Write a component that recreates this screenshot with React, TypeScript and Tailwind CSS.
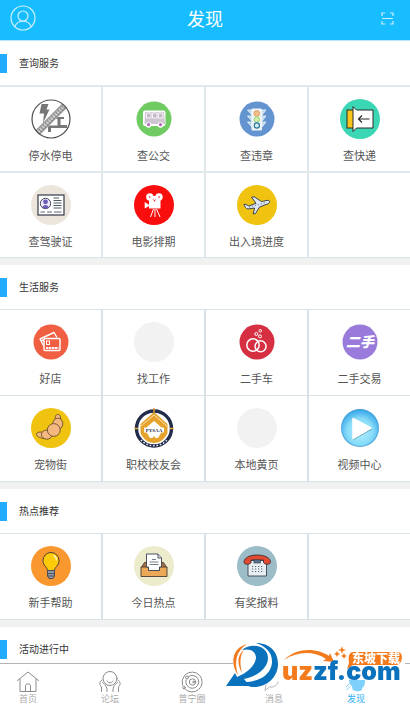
import React, { FC, ReactNode } from "react";

interface IService {
  label: string;
  icon: ReactNode;
}

interface ISection {
  title: string;
  cell: string;
  items: IService[];
}

const Badge: FC<{ fill: string; r?: number; children?: ReactNode }> = ({
  fill,
  r = 20,
  children,
}) => (
  <svg viewBox="0 0 40 40" className="w-10 h-10" aria-hidden="true">
    <circle cx="20" cy="20" r={r} fill={fill} />
    {children}
  </svg>
);

const OutageIcon = () => (
  <Badge fill="#fff">
    <path d="M10.5 5H17.5L15.5 10.5H18.5L12 24L13 14.5H8.5Z" fill="#777" />
    <path d="M24 18H33V20H29.5V26H36V29H20V33H17V26.5H26.5V20H24Z" fill="#777" />
    <path d="M4.5 31.5L31.5 4.5L36 9L9 36Z" fill="#c4c4c4" />
    <path d="M6.5 34L34 6.500" stroke="#8a8a8a" strokeWidth="4" strokeDasharray="1.5 1.5" />
    <path d="M7 33.5L34 6.5" stroke="#eee" strokeWidth="1" strokeDasharray="2 1" />
    <path d="M5 31.5L31.5 5M8.5 35L35 8.5" stroke="#666" strokeWidth="0.8" />
    <circle cx="20" cy="20" r="19" fill="none" stroke="#4f4f4f" strokeWidth="1.2" />
  </Badge>
);

const BusIcon = () => (
  <Badge fill="#6fcb62" r={17.5}>
    <rect x="9" y="11.5" width="22.5" height="15.5" rx="2" fill="#fff" />
    <path d="M11 13H30L31 25H10.5Z" fill="#cfc5d2" />
    <path
      d="M12.5 14H17V19H12.5ZM18.5 14H23V19H18.5ZM24.5 14H28.5L29 19H24.5Z"
      fill="#c3bdc9"
      stroke="#fff"
      strokeWidth="0.8"
    />
    <circle cx="14.5" cy="26" r="2.8" fill="#fff" />
    <circle cx="26.5" cy="26" r="2.8" fill="#fff" />
    <circle cx="14.5" cy="25.6" r="1.6" fill="#b266b8" />
    <circle cx="26.5" cy="25.6" r="1.6" fill="#b266b8" />
  </Badge>
);

const TrafficIcon = () => (
  <Badge fill="#6394cf" r={17.5}>
    <path
      d="M10.5 11H15V16ZM10.5 17H15V22ZM10.5 23H15V28ZM29 11H25V16ZM29 17H25V22ZM29 23H25V28Z"
      fill="#b9d6ee"
      stroke="#e4f0f8"
      strokeWidth="0.9"
    />
    <rect x="14.5" y="9.5" width="10.5" height="22" rx="1" fill="#eef4f4" />
    <circle cx="19.8" cy="14.5" r="2.8" fill="#f3c08a" stroke="#dc9a5c" />
    <circle cx="19.8" cy="20.5" r="2.8" fill="#cdebab" stroke="#9fd07d" />
    <circle cx="19.8" cy="26.5" r="2.6" fill="#d6ecf3" stroke="#24779b" strokeWidth="1.2" />
  </Badge>
);

const ExpressIcon = () => (
  <Badge fill="#3bd6b4">
    <rect x="7" y="11" width="7" height="18" fill="#f8c51b" stroke="#2b2b2b" />
    <path
      d="M13 7.5L16.5 11H33V29H16.5L13 32.5Z"
      fill="#fff"
      stroke="#2b2b2b"
      strokeWidth="1"
    />
    <path d="M29.5 20H18.5M22 16.5L18.5 20L22 23.5" fill="none" stroke="#2b2b2b" strokeWidth="1.2" />
  </Badge>
);

const LicenceIcon = () => (
  <Badge fill="#ebe5dc">
    <rect x="7" y="10" width="26" height="20" fill="#fff" stroke="#34374a" strokeWidth="1.2" />
    <circle cx="14.5" cy="18.5" r="5.2" fill="#ebe8fa" stroke="#34374a" strokeWidth="0.9" />
    <circle cx="14.5" cy="16.8" r="2.4" fill="#6d5bb8" />
    <path d="M11.5 22.5C11.5 19 17.5 19 17.5 22.5C16 23.7 13 23.7 11.5 22.5Z" fill="#6d5bb8" />
    <path
      d="M22.5 13H28M22.5 15.5H30.5M22.5 18H30.5M22.5 20.5H30.5M22.5 23H30.5"
      stroke="#4c5c60"
      strokeWidth="1.2"
    />
    <path d="M9.5 27H14M16 27H21M23 27H30.5" stroke="#5b6a75" strokeWidth="1" />
  </Badge>
);

const MovieIcon = () => (
  <Badge fill="#f90d0d">
    <circle cx="15.8" cy="12" r="3.7" fill="#fff" />
    <circle cx="25" cy="12" r="3.7" fill="#fff" />
    <path d="M15 14.5H26.5V23.5H15Z" fill="#fff" />
    <path d="M18 11L20.5 16L23 11Z" fill="#fff" />
    <path d="M10.7 17V23.5L16 20.5Z" fill="#fff" />
    <circle cx="15.8" cy="12" r="0.8" fill="#f90d0d" />
    <circle cx="25" cy="12" r="0.8" fill="#f90d0d" />
    <circle cx="20.5" cy="15.8" r="0.8" fill="#f90d0d" />
    <path d="M19.5 24L16.5 32M21 24V32M22.5 24L26 32" stroke="#fff" strokeWidth="1" />
  </Badge>
);

const PlaneIcon = () => (
  <Badge fill="#efc30f">
    <path
      d="M7 19.2L9.2 19.6L11.8 21L19 18.3L14.6 12.2L17.3 11.8L24.5 16.6L30 15.4C33.4 15 33.4 17.6 31 18.8L22.5 22L18.6 28.4L16.2 29L17.6 23L11 24C8.5 23.5 7.5 21.5 7 19.2Z"
      fill="#dfe8f4"
      stroke="#3f4650"
      strokeWidth="1"
      strokeLinejoin="round"
    />
    <path d="M12 22.2L28 17.8" stroke="#6b86ad" strokeWidth="1" strokeDasharray="1.5 1.5" />
  </Badge>
);

const CardIcon = () => (
  <Badge fill="#f15f43" r={17.5}>
    <path
      d="M12.5 23.5L9 17L23 10.5L26 15.5M10 19L13.5 17.5"
      fill="none"
      stroke="#fff"
      strokeWidth="1.4"
      strokeLinejoin="round"
    />
    <rect x="13" y="16.5" width="16" height="12" rx="1" fill="#f15f43" stroke="#fff" strokeWidth="1.4" />
    <rect x="15.5" y="19" width="3" height="3.5" fill="none" stroke="#fff" strokeWidth="1" />
    <path d="M15 26H27.5" stroke="#fff" strokeWidth="2" strokeDasharray="2.4 0.6" />
  </Badge>
);

const RingsIcon = () => (
  <Badge fill="#d72f42" r={17.5}>
    <g fill="none" stroke="#fff">
      <circle cx="16" cy="23" r="6.2" strokeWidth="1.5" />
      <circle cx="23.6" cy="24.3" r="5.5" strokeWidth="1.5" />
      <circle cx="19.3" cy="12" r="1.5" />
      <circle cx="23.2" cy="8.8" r="1.3" />
      <circle cx="23" cy="14.4" r="1.5" />
    </g>
  </Badge>
);

const SecondHandIcon = () => (
  <Badge fill="#9a7bdb" r={17.5}>
    <text
      x="20"
      y="25"
      textAnchor="middle"
      fill="#fff"
      className="text-[14px] font-black italic font-['Noto_Sans_CJK_SC',sans-serif]"
    >
      二手
    </text>
  </Badge>
);

const CroissantIcon = () => (
  <Badge fill="#efc30f">
    <g fill="#f5b880" stroke="#5b4226" strokeWidth="0.8">
      <path d="M24.5 12C23.5 8 25.5 6 27.5 6.500C29.5 7 30 10.500 29.500 13Z" />
      <path d="M13 24.500C9.500 23.500 5.500 24 5.500 26.500C6 29 9.500 30 13 30.500Z" />
      <ellipse cx="26.800" cy="15.800" rx="5" ry="5.600" />
      <ellipse cx="15.800" cy="26.600" rx="5.400" ry="4.600" />
      <circle cx="22.800" cy="22" r="6.400" />
    </g>
  </Badge>
);

const SchoolIcon = () => (
  <Badge fill="#fff" r={19}>
    <circle cx="20" cy="20.5" r="17.5" fill="#fff" stroke="#222c4b" strokeWidth="3.4" />
    <path
      d="M7 32A17.5 17.5 0 0 0 33 32"
      fill="none"
      stroke="#dfe2ea"
      strokeWidth="1.6"
      strokeDasharray="1.6 1.8"
    />
    <path d="M20 4L6.500 16V25C9 31 14 35 20 35S31 31 33.500 25V16Z" fill="#e5a32d" />
    <path d="M7 18L20 7L33 18" fill="none" stroke="#fbe7bc" strokeWidth="0.9" />
    <path
      d="M13 19L20 13L27 19V25L24 30H21.5L20 28L18.5 30H16L13 25Z"
      fill="#fff"
    />
    <rect x="10" y="19.5" width="20" height="5" fill="#fff" />
    <text
      x="20"
      y="24"
      textAnchor="middle"
      fill="#222c4b"
      className="text-[5px] font-bold font-['Liberation_Serif',serif]"
    >
      PYSAA
    </text>
    <path d="M20 0V4M0.5 20.5H4M36 20.5H39.5" stroke="#e2a02c" strokeWidth="1.5" />
  </Badge>
);

const VideoIcon = () => (
  <Badge fill="#4a9fd6" r={19}>
    <defs>
      <radialGradient id="videoGlow" cx="0.5" cy="0.6" r="0.6">
        <stop offset="0" stopColor="#b8f1ff" />
        <stop offset="0.6" stopColor="#86dbf8" />
        <stop offset="1" stopColor="#35a5e8" />
      </radialGradient>
    </defs>
    <circle cx="20" cy="20" r="18.2" fill="url(#videoGlow)" />
    <path d="M13.500 31.500L32 21" stroke="#5b9fb5" strokeWidth="1" />
    <path
      d="M13 10.5L31 20L13 30.5Z"
      fill="#fff"
      stroke="#fff"
      strokeWidth="1.5"
      strokeLinejoin="round"
    />
  </Badge>
);

const BulbIcon = () => (
  <Badge fill="#f8982f">
    <path
      d="M16.5 24.5C16.5 21 12 20 12 14.5A8 8 0 0 1 28 14.5C28 20 23.5 21 23.5 24.5Z"
      fill="#fdcb0a"
      stroke="#4a4035"
      strokeWidth="1"
    />
    <path
      d="M22.5 9.5C24.5 10.5 25.5 12.5 25.5 14.5"
      stroke="#fff3a8"
      strokeWidth="1.5"
      fill="none"
    />
    <path
      d="M16.5 24.5H23.5V30L22 32.5H18L16.5 30Z"
      fill="#8f9aa6"
      stroke="#4a4a50"
      strokeWidth="1"
    />
    <path d="M16.5 27.5H23.5M17 30H23" stroke="#4a4a50" strokeWidth="0.9" />
  </Badge>
);

const InboxIcon = () => (
  <Badge fill="#ecebcc">
    <path d="M10.5 16.5H29.5L33 22H7Z" fill="#a86f48" stroke="#4b3d33" strokeWidth="0.9" />
    <path
      d="M7 21H14.5V24.5H25.5V21H33V30.5H7Z"
      fill="#eba857"
      stroke="#4b3d33"
      strokeWidth="0.9"
    />
    <path
      d="M12.5 8H24L27.5 12V21H25.5V24.5H14.5V21H12.5Z"
      fill="#fff"
      stroke="#3b4350"
      strokeWidth="0.9"
    />
    <path d="M24 8V12H27.5" fill="#dfe3ea" stroke="#3b4350" strokeWidth="0.9" />
    <path d="M18 13.5H22M15.5 16H24.5M15.5 18.5H24.5" stroke="#56606e" strokeWidth="0.8" />
  </Badge>
);

const PhoneIcon = () => (
  <Badge fill="#9cbdc8">
    <path
      d="M11 17L14 14.5H27L29.5 17V30H11Z"
      fill="#e9eef2"
      stroke="#3d434c"
      strokeWidth="0.9"
      strokeLinejoin="round"
    />
    <path
      d="M7 16.5C6.5 6.5 34 6.5 33.5 16.5C33 19 27 18.5 26.5 16.500V14H14V16.500C13.500 18.500 7.500 19 7 16.500Z"
      fill="#e2492f"
      stroke="#3d2e30"
      strokeWidth="0.9"
    />
    <rect x="17" y="14" width="6.5" height="3" fill="#55779a" stroke="#3d434c" strokeWidth="0.7" />
    <path
      d="M15 20.5H26M15 23H26M15 25.5H26"
      stroke="#5d6872"
      strokeWidth="1.1"
      strokeDasharray="1.2 1.8"
    />
  </Badge>
);

const sections: ISection[] = [
  {
    title: "查询服务",
    cell: "border-t-2 border-r-2 border-[#e1e8ec]",
    items: [
      { label: "停水停电", icon: <OutageIcon /> },
      { label: "查公交", icon: <BusIcon /> },
      { label: "查违章", icon: <TrafficIcon /> },
      { label: "查快递", icon: <ExpressIcon /> },
      { label: "查驾驶证", icon: <LicenceIcon /> },
      { label: "电影排期", icon: <MovieIcon /> },
      { label: "出入境进度", icon: <PlaneIcon /> },
    ],
  },
  {
    title: "生活服务",
    cell: "border-t border-r-2 border-[#d9e2e7]",
    items: [
      { label: "好店", icon: <CardIcon /> },
      { label: "找工作", icon: <Badge fill="#f2f2f2" /> },
      { label: "二手车", icon: <RingsIcon /> },
      { label: "二手交易", icon: <SecondHandIcon /> },
      { label: "宠物街", icon: <CroissantIcon /> },
      { label: "职校校友会", icon: <SchoolIcon /> },
      { label: "本地黄页", icon: <Badge fill="#f2f2f2" /> },
      { label: "视频中心", icon: <VideoIcon /> },
    ],
  },
  {
    title: "热点推荐",
    cell: "border-t border-r-2 border-[#d9e2e7]",
    items: [
      { label: "新手帮助", icon: <BulbIcon /> },
      { label: "今日热点", icon: <InboxIcon /> },
      { label: "有奖报料", icon: <PhoneIcon /> },
    ],
  },
  { title: "活动进行中", cell: "", items: [] },
];

const TabIcon: FC<{ children: ReactNode }> = ({ children }) => (
  <svg
    viewBox="0 0 22 22"
    className="w-[22px] h-[22px]"
    fill="none"
    stroke="#8a8a8a"
    strokeWidth="1"
    strokeLinecap="round"
    strokeLinejoin="round"
    aria-hidden="true"
  >
    {children}
  </svg>
);

const tabs = [
  {
    label: "首页",
    icon: (
      <TabIcon>
        <path d="M0.5 9.5L11 1L21.5 9.5M3 8V20.5H19V8M8.5 20.5V14.5C8.5 12.5 13.5 12.5 13.5 14.5V20.5" />
      </TabIcon>
    ),
  },
  {
    label: "论坛",
    icon: (
      <TabIcon>
        <circle cx="11" cy="7.5" r="7" />
        <path d="M8 10C9.5 12.5 12.5 12.5 14 10M3 9C0 11 0.5 14 2.5 16V20.5M3.5 11.5C5 13 8.5 15 8 20.5M19 9C22 11 21.5 14 19.5 16V20.5M18.5 11.5C17 13 13.5 15 14 20.5" />
      </TabIcon>
    ),
  },
  {
    label: "普宁圈",
    icon: (
      <TabIcon>
        <path d="M4.5 3.5A10 10 0 1 1 3.5 17.5M1.5 14A10 10 0 0 1 3.5 4.5" />
        <path d="M7.5 5.5A6.5 6.5 0 1 1 5 9" />
        <circle cx="11.5" cy="11" r="3.2" />
        <circle cx="12.5" cy="11" r="0.8" />
        <circle cx="6" cy="6.5" r="1.5" />
        <circle cx="3" cy="16.5" r="1.3" />
      </TabIcon>
    ),
  },
  {
    label: "消息",
    icon: (
      <TabIcon>
        <path d="M15 11C14 15 10 16.5 6.500 16L2 19.500L3 14" stroke="#b5b5b5" />
      </TabIcon>
    ),
  },
  {
    label: "发现",
    icon: (
      <TabIcon>
        <path
          d="M4 9H20C20 14 19 16 17 17V19C14 21 10 20.5 7.5 18.5L7 15C5 14 4 12 4 9Z"
          fill="#7fd0fb"
          stroke="none"
        />
        <path d="M1 16L4 13M1.5 19L5 15.500" stroke="#7fd0fb" />
      </TabIcon>
    ),
  },
];

const Watermark = () => (
  <svg
    viewBox="0 0 180 50"
    className="absolute right-[5px] bottom-[13px] w-[180px] h-[50px] pointer-events-none"
    aria-hidden="true"
  >
    <rect x="8" y="19" width="172" height="4" fill="#fff" />
    <path d="M22 2C7 6 5 21 13 33C9 20 11 9 22 2Z" fill="#f47b1c" />
    <path d="M19 8C12 13 12 22 17 31C14.5 21 15 13 19 8Z" fill="#f47b1c" />
    <path
      d="M17 8C27 0 43 4 43 16C43 27 30 35 19 37L25 44L1 44L10 31L12 35C22 31 30 24 31 16C31 9 25 6 17 8Z"
      fill="#0a72bd"
    />
    <path
      d="M31 1C45 1 53 10 53 22C53 35 42 45 29 45C24 45 20 43 19 40C35 40 47 32 47 19C47 10 40 4 31 1Z"
      fill="#0a72bd"
    />
    <path
      d="M59 18C72 5 92 6 104 14L105 11L109 20L98 19L101 17C89 9 73 9 59 18Z"
      fill="#f47b1c"
    />
    <path
      d="M117 4L118 7L121 8L118 9L117 12L116 9L113 8L116 7ZM112 9L113 11L115 12L113 13L112 15L111 13L109 12L111 11ZM119 11L120 13L122 14L120 15L119 17L118 15L116 14L118 13Z"
      fill="#f47b1c"
    />
    <path
      d="M128 10H173C179 10 178 23 171 23H128L122 27L124 21C123 15 124 10 128 10Z"
      fill="#f47b1c"
    />
    <text
      x="57"
      y="38"
      fill="#0a72bd"
      className="text-[25px] font-black font-['Inter',sans-serif]"
    >
      <tspan fill="#f47b1c">uz</tspan>zf.com
    </text>
    <text
      x="151"
      y="21"
      textAnchor="middle"
      fill="#fff"
      className="text-[12px] font-black font-['Noto_Sans_CJK_SC',sans-serif]"
    >
      东坡下载
    </text>
  </svg>
);

const ServiceSection: FC<{ section: ISection }> = ({ section }) => {
  // pad the last row so that its cell borders are drawn too
  const blanks = (4 - (section.items.length % 4)) % 4;
  return (
    <section className="bg-white overflow-hidden">
      <div className="h-11 flex items-center gap-3">
        <span className="w-[7px] h-[19px] bg-[#22abff]" />
        <h2 className="text-[10px] leading-4 text-[#333]">{section.title}</h2>
      </div>
      {section.items.length > 0 && (
        <div className="grid grid-cols-4 -mr-0.5 border-b border-[#d9e2e7]">
          {section.items.map((item) => (
            <a
              key={item.label}
              href="#"
              className={`h-[86px] pt-3 flex flex-col items-center gap-2 ${section.cell}`}
            >
              {item.icon}
              <span className="text-[11px] leading-4 text-[#555] whitespace-nowrap">
                {item.label}
              </span>
            </a>
          ))}
          {Array.from({ length: blanks }).map((_, idx) => (
            <span key={idx} className={`h-[86px] ${section.cell}`} />
          ))}
        </div>
      )}
    </section>
  );
};

const App: FC = () => {
  return (
    <div className="min-h-screen bg-white font-['Noto_Sans_CJK_SC',sans-serif]">
      <header className="h-[41px] px-2.5 pb-1 grid grid-cols-3 items-center bg-[#18bdff] border-b border-[#b5e6fa]">
        <button type="button" aria-label="个人中心" className="w-fit">
          <svg
            viewBox="0 0 26 26"
            className="w-[26px] h-[26px]"
            fill="none"
            stroke="#c9f0ff"
            strokeWidth="1.2"
          >
            <circle cx="13" cy="13" r="12" />
            <circle cx="13" cy="11" r="5" />
            <path d="M5 21.5C7 14.5 19 14.5 21 21.5" />
          </svg>
        </button>
        <h1 className="text-center text-[18px] leading-6 text-white">发现</h1>
        <button type="button" aria-label="扫一扫" className="w-fit justify-self-end mr-1.5">
          <svg
            viewBox="0 0 13 13"
            className="w-[13px] h-[13px]"
            fill="none"
            stroke="#c9f0ff"
            strokeWidth="1.2"
          >
            <path d="M1 4V1H4M9 1H12V4M12 9V12H9M4 12H1V9M1 6.5H12" />
          </svg>
        </button>
      </header>

      <main className="flex flex-col gap-[7px] bg-[#f1f1f1]">
        {sections.map((section) => (
          <ServiceSection key={section.title} section={section} />
        ))}
      </main>

      <nav className="fixed bottom-0 inset-x-0 h-[42px] bg-white border-t border-[#b5b5b5]">
        <div className="grid grid-cols-5 pt-[7px]">
          {tabs.map((tab) => (
            <button
              key={tab.label}
              type="button"
              className="ml-2 w-10 flex flex-col items-center"
            >
              {tab.icon}
              <span
                className={`text-[9px] leading-3 ${
                  tab.label === "发现" ? "text-[#2fb0f5]" : "text-[#aaa]"
                }`}
              >
                {tab.label}
              </span>
            </button>
          ))}
        </div>
        <Watermark />
      </nav>
    </div>
  );
};

export default App;
